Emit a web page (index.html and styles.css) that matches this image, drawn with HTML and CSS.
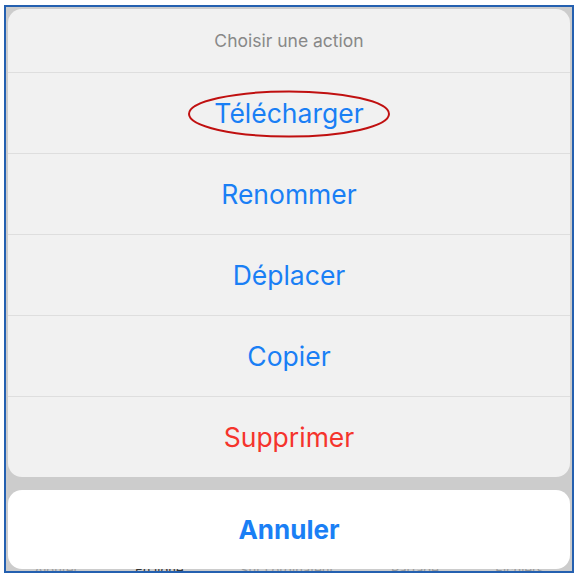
FILE: index.html
```html
<!DOCTYPE html>
<html lang="fr">
<head>
<meta charset="utf-8">
<link rel="stylesheet" href="styles.css">
</head>
<body>
<div class="frame">
  <div class="sheet">
    <div class="title">Choisir une action</div>
    <div class="row highlighted">
      <span>Télécharger</span>
      <svg class="ring" width="204" height="50" viewBox="0 0 204 50"><ellipse cx="102" cy="25" rx="100" ry="22.5" fill="none" stroke="#c01010" stroke-width="2"/></svg>
    </div>
    <div class="row">Renommer</div>
    <div class="row">Déplacer</div>
    <div class="row">Copier</div>
    <div class="row danger">Supprimer</div>
  </div>
  <div class="cancel">Annuler</div>
  <div class="tabs">
    <span>Ajouter</span><span class="dark">En ligne</span><span>Sur l'ordinateur</span><span>Partagé</span><span>Fichiers</span>
  </div>
</div>
</body>
</html>
```

FILE: styles.css
```css
html, body {
  margin: 0;
  padding: 0;
  background: #ffffff;
}
body {
  font-family: Inter, Roboto, "Liberation Sans", sans-serif;
  padding: 5px 4px 0 4px;
}
.frame {
  box-sizing: border-box;
  width: 570px;
  height: 568px;
  border: 2px solid #2460b0;
  background: #cccccc;
  padding: 2px 2px 0 2px;
  display: flex;
  flex-direction: column;
  overflow: hidden;
  position: relative;
}
.sheet {
  background: #f1f1f1;
  border-radius: 14px;
  display: flex;
  flex-direction: column;
}
.title {
  height: 63px;
  display: flex;
  align-items: center;
  justify-content: center;
  color: #888888;
  font-size: 17.5px;
  border-bottom: 1px solid #dedede;
}
.row {
  height: 80px;
  display: flex;
  align-items: center;
  justify-content: center;
  color: #1a7ff5;
  font-size: 26.5px;
  border-bottom: 1px solid #dedede;
  position: relative;
}
.row:last-child {
  border-bottom: none;
}
.danger {
  color: #f5342c;
}
.ring {
  position: absolute;
  left: 179px;
  top: 16px;
}
.cancel {
  margin-top: 13px;
  height: 79px;
  background: #ffffff;
  border-radius: 14px;
  display: flex;
  align-items: center;
  justify-content: center;
  color: #1a7ff5;
  font-size: 26px;
  font-weight: 700;
  position: relative;
  z-index: 1;
}
.tabs {
  position: absolute;
  left: 0;
  right: 0;
  top: 555px;
  display: flex;
  justify-content: space-around;
  font-size: 13px;
  color: #9a9a9a;
}
.tabs .dark {
  color: #333333;
}
```
